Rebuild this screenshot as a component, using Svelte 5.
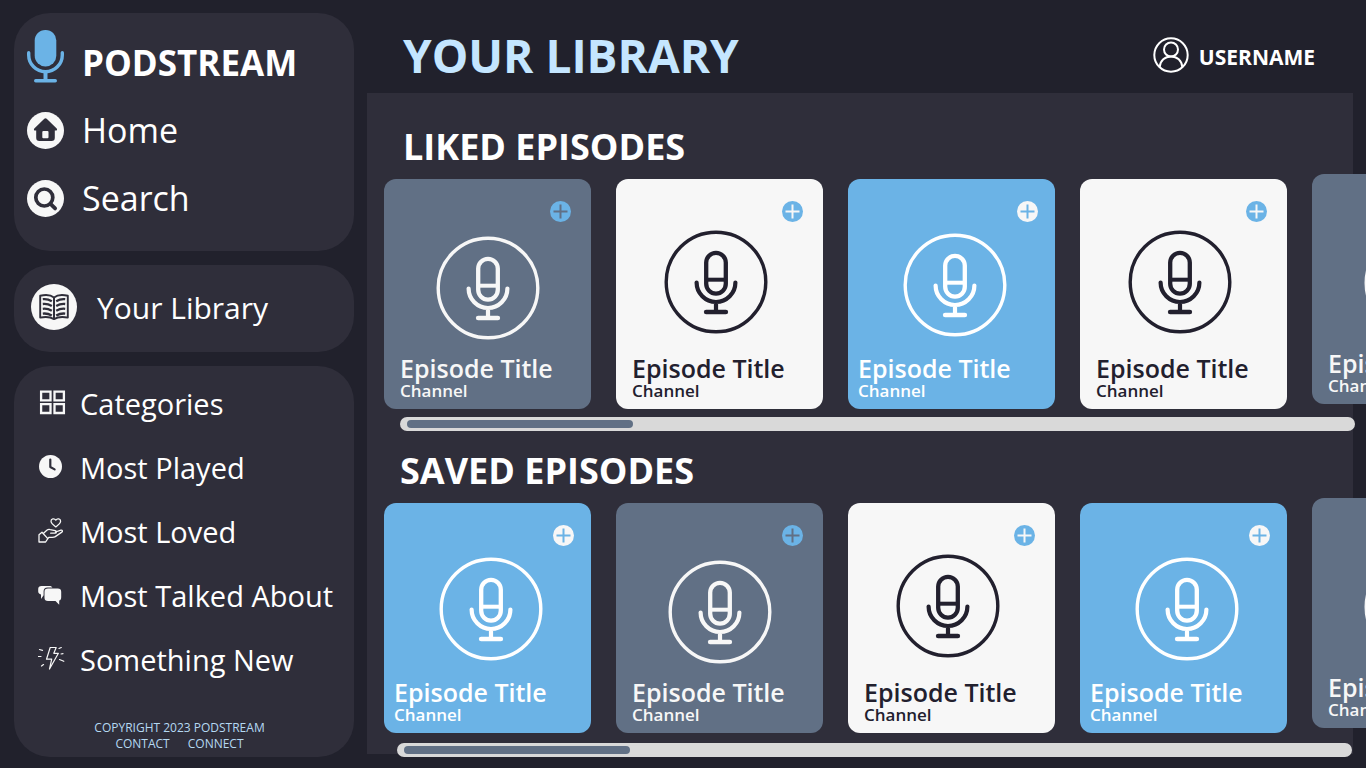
<script>
  const menu = [
    { label: 'Categories', icon: 'grid' },
    { label: 'Most Played', icon: 'clock' },
    { label: 'Most Loved', icon: 'hand' },
    { label: 'Most Talked About', icon: 'chat' },
    { label: 'Something New', icon: 'bolt' }
  ];

  const shelves = [
    { id: 'liked', title: 'LIKED EPISODES', tones: ['slate', 'light', 'sky', 'light', 'slate'] },
    { id: 'saved', title: 'SAVED EPISODES', tones: ['sky', 'slate', 'light', 'sky', 'slate'] }
  ];

  let rows = $state([]);

  function slide(index, event) {
    const row = rows[index];
    row.scrollLeft = (row.scrollWidth - row.clientWidth) * (Number(event.currentTarget.value) / 100);
  }
</script>

<div class="app">
  <aside class="sidebar">
    <nav class="panel primary" aria-label="Main">
      <a class="brand" href="#top">
        <svg width="37" height="53" viewBox="0 0 37 53" fill="none" stroke="#6bb3e6" stroke-linecap="round" aria-hidden="true">
          <rect x="7.7" y="0" width="21.6" height="36.4" rx="10.6" fill="#6bb3e6" stroke="none" />
          <path d="M1.7 22.7v2.2a16.8 16.8 0 0 0 33.6 0v-2.2" stroke-width="3.4" />
          <path d="M18.5 42v8" stroke-width="4" stroke-linecap="butt" />
          <path d="M8.7 50.8h19.6" stroke-width="3.4" />
        </svg>
        <span>PODSTREAM</span>
      </a>
      <a class="link" href="#home">
        <svg width="37" height="37" viewBox="0 0 37 37" aria-hidden="true">
          <circle cx="18.5" cy="18.5" r="18.5" fill="#f7f7f7" />
          <path d="M17.3 6.8a1.8 1.8 0 0 1 2.4 0l10 9.6c.8.9.3 2.2-.9 2.2h-1v7.2a3.2 3.2 0 0 1-3.2 3.2H12.4a3.2 3.2 0 0 1-3.2-3.2v-7.2h-1c-1.2 0-1.7-1.300-.9-2.200z" fill="#2f2e3a" />
          <rect x="15.300" y="19" width="6.200" height="7.300" rx="1" fill="#f7f7f7" />
        </svg>
        <span>Home</span>
      </a>
      <a class="link" href="#search">
        <svg width="37" height="37" viewBox="0 0 37 37" aria-hidden="true">
          <circle cx="18.500" cy="18.500" r="18.500" fill="#f7f7f7" />
          <circle cx="17.300" cy="17.500" r="8.500" fill="none" stroke="#2f2e3a" stroke-width="3.700" />
          <path d="M23.500 23.800l4.600 4.600" stroke="#2f2e3a" stroke-width="3.800" stroke-linecap="round" />
        </svg>
        <span>Search</span>
      </a>
    </nav>

    <nav class="panel library" aria-label="Library">
      <a href="#library" aria-current="page">
        <svg width="46" height="46" viewBox="0 0 46 46" fill="none" stroke="#2f2e3a" aria-hidden="true">
          <circle cx="23" cy="23" r="23" fill="#f7f7f7" stroke="none" />
          <path d="M23 13.500C19 10.300 14 10.700 9.200 11.800v21.800c5-1 9.500-1.100 13.800 1.500 4.300-2.600 8.800-2.500 13.800-1.500V11.800C32 10.700 27 10.300 23 13.500z" stroke-width="1.900" stroke-linejoin="round" />
          <path d="M23 13v22" stroke-width="2" />
          <path d="M11.800 15.200c3.500-.4 6 .2 9 2M11.800 20c3.500-.4 6 .2 9 2M11.800 24.800c3.500-.4 6 .2 9 2M11.800 29.600c3.500-.4 6 .2 9 2M34.200 15.200c-3.500-.4-6 .2-9 2M34.200 20c-3.500-.4-6 .2-9 2M34.200 24.800c-3.500-.4-6 .2-9 2M34.200 29.600c-3.500-.4-6 .2-9 2" stroke-width="2.300" />
        </svg>
        <span>Your Library</span>
      </a>
    </nav>

    <div class="panel explore">
      <nav aria-label="Explore">
        {#each menu as item}
          <a href="#{item.icon}">
            <svg width="28" height="28" viewBox="0 0 28 28" fill="none" stroke="#f7f7f7" stroke-linecap="round" stroke-linejoin="round" aria-hidden="true">
              {#if item.icon === 'grid'}
                <path d="M3.100 2.600h9.400v8.800H3.100zM16.500 2.600h9.400v8.800h-9.400zM3.100 15.200h9.400V24H3.100zM16.500 15.200h9.400V24h-9.400z" stroke-width="2.300" stroke-linejoin="miter" />
              {:else if item.icon === 'clock'}
                <circle cx="12.500" cy="13.500" r="11.500" fill="#f7f7f7" stroke="none" />
                <path d="M12.300 6.500V14l4.300 2.400" stroke="#2f2e3a" stroke-width="2.200" />
              {:else if item.icon === 'hand'}
                <path d="M17.800 9.900c-2.600-2-4.800-3.700-4.800-5.700 0-2.500 3.300-3.300 4.800-1.100 1.500-2.200 4.800-1.400 4.800 1.100 0 2-2.200 3.700-4.800 5.700z" stroke-width="1.300" />
                <path d="M1 17.700l3-2.500 5.800 6.400-2.200 3.400H1zM5.300 16.500l3.500-3.300c1-.7 2.200-.9 3.400-.6l5 1.100c1.800.5 1.500 2.500-.2 2.500h-4.300M17.500 15l5.400-1.800c1.500-.4 2.100 1.100.9 1.900l-6.500 4.500c-1 .6-2 .7-3 .7h-3.200l-1.800 1.700" stroke-width="1.300" />
              {:else if item.icon === 'chat'}
                <path d="M3.500 5h8c1.600 0 2.500.6 2.900 1.500H9.500C7 6.500 5.600 8 5.600 10.300v4L3 17.900v-4.500C1.100 13 .2 12 .2 10.500V8c0-2 1.200-3 3.300-3z" fill="#f7f7f7" stroke="none" />
                <path d="M10 7.500h9.800c2.200 0 3.400 1.100 3.400 3.200v5.600c0 2-.7 3-2 3.200v4.200L17.500 20H10c-2.300 0-3.500-1.200-3.500-3.300v-6c0-2 1.200-3.200 3.500-3.200z" fill="#f7f7f7" stroke="none" />
              {:else}
                <path d="M12.200 2.500h6l-2.400 5.800h4.600L11.500 24l2.200-9.800H8.500z" stroke-width="1.200" />
                <path d="M1.500 4.500l3 .8M.5 11.500H3M3.500 21l2-1.400M21 3.500L23.300 2.500M23 9l2-.4M21.500 14.500l4.300 1.800" stroke-width="1.200" />
              {/if}
            </svg>
            <span>{item.label}</span>
          </a>
        {/each}
      </nav>
      <footer>
        <p>COPYRIGHT 2023 PODSTREAM</p>
        <p class="contact"><a href="#contact">CONTACT</a><a href="#connect">CONNECT</a></p>
      </footer>
    </div>
  </aside>

  <main>
    <header>
      <h1>YOUR LIBRARY</h1>
      <button class="user" type="button">
        <svg width="36" height="36" viewBox="0 0 36 36" fill="none" stroke="#fff" stroke-width="2" aria-hidden="true">
          <circle cx="18" cy="18" r="16.700" />
          <circle cx="18" cy="12.500" r="7" />
          <path d="M6.700 30c.5-6.500 5.300-10.500 11.300-10.500S28.800 23.500 29.300 30" />
        </svg>
        <span>USERNAME</span>
      </button>
    </header>

    <div class="content">
      {#each shelves as shelf, index}
        <section class={shelf.id} aria-labelledby="{shelf.id}-title">
          <h2 id="{shelf.id}-title">{shelf.title}</h2>
          <div class="row" bind:this={rows[index]}>
            {#each shelf.tones as tone}
              <article class="card {tone}">
                <button class="add" type="button" aria-label="Add episode">
                  <svg width="21" height="21" viewBox="0 0 21 21" aria-hidden="true">
                    <circle class="disc" cx="10.500" cy="10.500" r="10.500" />
                    <path class="cross" d="M10.500 3.500v14M3.500 10.500h14" />
                  </svg>
                </button>
                <svg class="art" width="104" height="104" viewBox="-52 -52 104 104" fill="none" stroke="currentColor" stroke-linecap="round" aria-hidden="true">
                  <circle r="49.800" stroke-width="3.400" />
                  <rect x="-9.800" y="-29.200" width="19.600" height="40.800" rx="9.800" stroke-width="4.300" />
                  <path d="M-9.800-2.300H9.800" stroke-width="4" stroke-linecap="butt" />
                  <path d="M-19.400.6a19.400 19.400 0 0 0 38.800 0M0 21v8" stroke-width="4.200" />
                  <path d="M-9.800 30H9.800" stroke-width="4.700" />
                </svg>
                <div class="text">
                  <h3>Episode Title</h3>
                  <p>Channel</p>
                </div>
              </article>
            {/each}
          </div>
          <input type="range" min="0" max="100" value="0" aria-label="Scroll {shelf.title}" oninput={(event) => slide(index, event)} />
        </section>
      {/each}
    </div>
  </main>
</div>

<style>
  :global(body) {
    margin: 0;
    background: #21212c;
  }

  .app {
    display: grid;
    grid-template-columns: 340px minmax(0, 1fr);
    gap: 13px;
    min-height: 100vh;
    box-sizing: border-box;
    padding-left: 14px;
    overflow: hidden;
    background: #21212c;
    color: #fff;
    font-family: "Open Sans", "Noto Sans", sans-serif;
  }

  h1, h2, h3, p {
    margin: 0;
  }

  a {
    color: inherit;
    text-decoration: none;
  }

  button {
    padding: 0;
    border: 0;
    background: none;
    color: inherit;
    font: inherit;
    cursor: pointer;
  }

  svg {
    display: block;
    flex: none;
  }

  .sidebar {
    display: flex;
    flex-direction: column;
    gap: 14px;
    padding: 13px 0 11px;
  }

  .panel {
    box-sizing: border-box;
    border-radius: 36px;
    background: #2f2e3a;
    white-space: nowrap;
  }

  .panel a {
    display: flex;
    align-items: center;
  }

  .primary {
    padding: 17px 13px 19px;
  }

  .primary a {
    gap: 18px;
    height: 68px;
    font-size: 34px;
  }

  .primary .brand {
    align-items: flex-start;
    height: 66px;
    font-size: 35px;
    font-weight: 700;
    line-height: 66px;
  }

  .library {
    padding: 0 17px 3px;
  }

  .library a {
    gap: 20px;
    height: 84px;
    font-size: 30px;
  }

  .explore {
    display: flex;
    flex: 1;
    flex-direction: column;
    justify-content: space-between;
    padding: 5px 0;
  }

  .explore nav a {
    gap: 14px;
    height: 64px;
    padding-left: 24px;
    font-size: 29px;
  }

  footer {
    padding-right: 9px;
    color: #b5d9f2;
    font-size: 12px;
    line-height: 16px;
    text-align: center;
  }

  .contact {
    display: flex;
    justify-content: center;
    gap: 18px;
  }

  main {
    display: flex;
    flex-direction: column;
    padding: 0 13px 14px 0;
  }

  header {
    display: flex;
    align-items: center;
    justify-content: space-between;
    box-sizing: border-box;
    height: 93px;
    padding: 17px 38px 0 36px;
  }

  h1 {
    color: #c4e6ff;
    font-size: 46px;
    font-weight: 700;
    line-height: 64px;
  }

  .user {
    display: flex;
    align-items: center;
    gap: 10px;
    font-size: 21px;
    font-weight: 700;
    line-height: 32px;
  }

  .user span {
    padding-top: 4px;
  }

  .content {
    display: flex;
    flex: 1;
    flex-direction: column;
    gap: 15px;
    padding-top: 29px;
    background: #2f2e3a;
  }

  section {
    --inset: 33px;
    display: flex;
    flex-direction: column;
  }

  .saved {
    --inset: 30px;
    margin-bottom: -3px;
  }

  h2 {
    margin: 0 0 2px;
    padding-left: calc(var(--inset) + 3px);
    font-size: 36px;
    font-weight: 700;
    line-height: 50px;
  }

  .row {
    display: flex;
    gap: 25px;
    margin-right: -13px;
    padding: 5px 0 0 17px;
    overflow: hidden;
  }

  .card {
    position: relative;
    display: flex;
    flex: none;
    flex-direction: column;
    justify-content: space-between;
    box-sizing: border-box;
    width: 207px;
    height: 230px;
    padding: 57px 16px 9px;
    border-radius: 12px;
  }

  .card:last-child {
    margin-top: -5px;
  }

  .slate {
    background: #617085;
    color: #f7f7f7;
  }

  .light {
    padding-top: 51px;
    background: #f7f7f7;
    color: #22202e;
  }

  .sky {
    padding-top: 54px;
    padding-left: 10px;
    background: #6bb3e6;
    color: #fff;
  }

  .art {
    align-self: center;
  }

  .light .art {
    margin-right: 8px;
  }

  .sky .art {
    margin-left: 12px;
  }

  .add {
    position: absolute;
    top: 22px;
    right: 20px;
  }

  .sky .add {
    right: 17px;
  }

  .disc {
    fill: #6bb3e6;
  }

  .cross {
    stroke: #617085;
    stroke-width: 2;
  }

  .light .cross {
    stroke: #f7f7f7;
  }

  .sky .disc {
    fill: #f7f7f7;
  }

  .sky .cross {
    stroke: #6bb3e6;
  }

  h3 {
    font-size: 25px;
    font-weight: 600;
    line-height: 28px;
    white-space: nowrap;
  }

  .text p {
    font-size: 17px;
    font-weight: 600;
    line-height: 18px;
  }

  input {
    appearance: none;
    box-sizing: border-box;
    width: calc(100% - 31px);
    height: 14px;
    margin: 8px 0 0 var(--inset);
    padding: 0 7px;
    border-radius: 7px;
    background: #d9d9d9;
  }

  .saved input {
    margin-top: 10px;
  }

  input::-webkit-slider-thumb {
    appearance: none;
    width: 226px;
    height: 8px;
    border-radius: 4px;
    background: #617085;
  }
</style>
